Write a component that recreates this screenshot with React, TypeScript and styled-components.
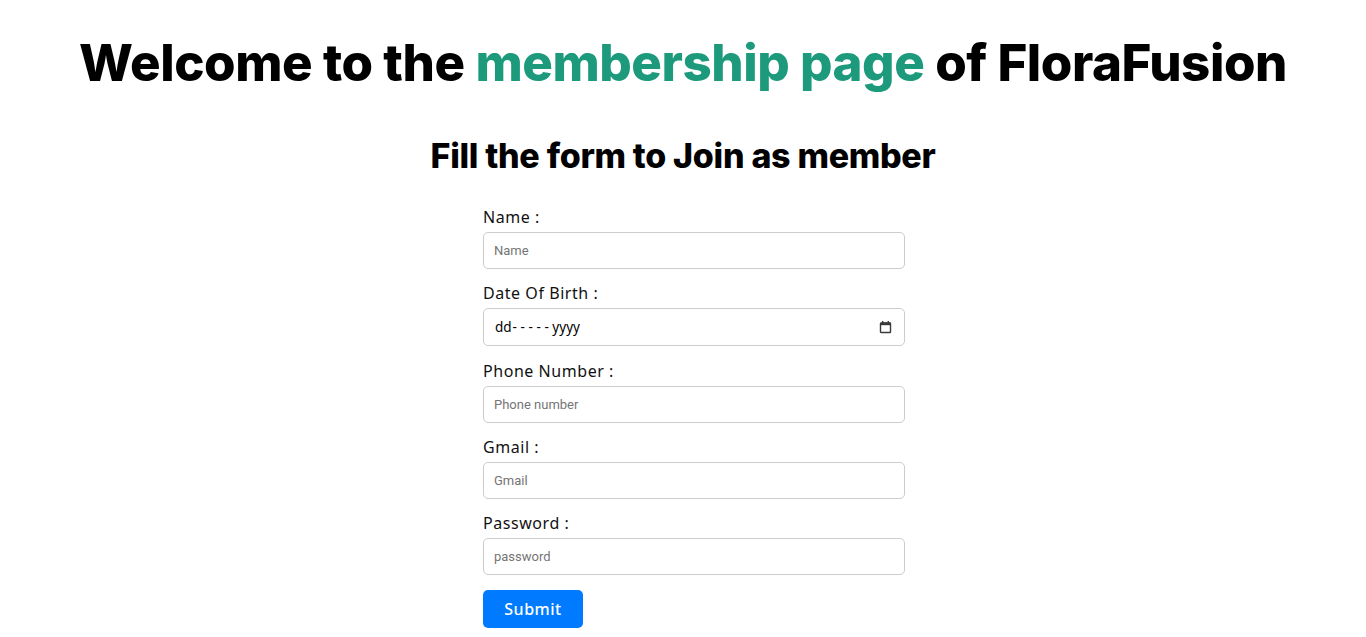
import React from "react";
import styled, { createGlobalStyle } from "styled-components";

const Global = createGlobalStyle`
  html, body { margin: 0; padding: 0; background: #ffffff; }
  body { font-family: "Liberation Sans", Arial, sans-serif; }
  * { box-sizing: border-box; }
`;

const Page = styled.main`
  display: flex;
  flex-direction: column;
  align-items: center;
  padding-top: 28px;
`;

const Title = styled.h1`
  margin: 0;
  font-family: Inter, "Open Sans", sans-serif;
  font-weight: 800;
  font-size: 51px;
  line-height: 70px;
  letter-spacing: -0.45px;
  color: #000000;
  text-align: center;
`;

const Accent = styled.span`
  color: #1c9a7b;
`;

const Subtitle = styled.h2`
  margin: 36px 0 0;
  font-family: Inter, "Open Sans", sans-serif;
  font-weight: 800;
  font-size: 34px;
  line-height: 44px;
  letter-spacing: -0.3px;
  color: #000000;
  text-align: center;
`;

const Form = styled.form`
  width: 422px;
  margin: 29px 0 0 22px;
  display: flex;
  flex-direction: column;
`;

const Field = styled.div<{ $extra?: number }>`
  display: flex;
  flex-direction: column;
  margin-bottom: ${(p) => 14 + (p.$extra ?? 0)}px;
`;

const Label = styled.label`
  font-family: "Noto Sans", "Open Sans", sans-serif;
  font-size: 16px;
  line-height: 20px;
  letter-spacing: 0.55px;
  color: #111111;
  margin-bottom: 5px;
`;

const Input = styled.input`
  width: 100%;
  height: 37px;
  border: 1px solid #cccccc;
  border-radius: 5px;
  padding: 0 10px;
  font-family: Roboto, sans-serif;
  font-size: 13px;
  color: #222;
  background: #fff;
  outline: none;
  &::placeholder { color: #757575; }
`;

const DateBox = styled.div`
  width: 100%;
  height: 38px;
  border: 1px solid #cccccc;
  border-radius: 5px;
  padding: 0 12px 0 11px;
  display: flex;
  align-items: center;
  justify-content: space-between;
  background: #fff;
  font-family: "Noto Sans", "DejaVu Sans", sans-serif;
  font-size: 13.5px;
  color: #000;
`;

const DateText = styled.span`
  display: inline-flex;
  align-items: center;
`;

const Dashes = styled.span`
  letter-spacing: 3.6px;
  margin: 0 0 0 1px;
`;

const Submit = styled.button`
  width: 100px;
  height: 38px;
  border: none;
  border-radius: 5px;
  background: #007bff;
  color: #ffffff;
  font-family: "Noto Sans", "Open Sans", sans-serif;
  font-size: 16px;
  font-weight: 500;
  letter-spacing: 0.5px;
  cursor: pointer;
  margin-top: 1px;
`;

const CalendarIcon = () => (
  <svg width="13" height="14" viewBox="0 0 13 14" aria-hidden="true">
    <rect x="1.5" y="3" width="10" height="9.5" fill="none" stroke="#3a3a3a" strokeWidth="1.4" rx="0.6" />
    <rect x="1.5" y="2.6" width="10" height="2.6" fill="#3a3a3a" />
    <rect x="3" y="1" width="1.4" height="2" fill="#3a3a3a" />
    <rect x="8.6" y="1" width="1.4" height="2" fill="#3a3a3a" />
  </svg>
);

const fields = [
  { label: "Name :", type: "text", ph: "Name" },
  { label: "Date Of Birth :", type: "date", ph: "" },
  { label: "Phone Number :", type: "tel", ph: "Phone number" },
  { label: "Gmail :", type: "email", ph: "Gmail" },
  { label: "Password :", type: "password", ph: "password" },
];

export default function App() {
  return (
    <>
      <Global />
      <Page>
        <Title>
          Welcome to the <Accent>membership page</Accent> of FloraFusion
        </Title>
        <Subtitle>Fill the form to Join as member</Subtitle>
        <Form onSubmit={(e) => e.preventDefault()}>
          {fields.map((f) => (
            <Field key={f.label} $extra={f.type === "date" ? 1 : 0}>
              <Label>{f.label}</Label>
              {f.type === "date" ? (
                <DateBox role="textbox" aria-label="Date Of Birth">
                  <DateText>
                    dd<Dashes>-----</Dashes>yyyy
                  </DateText>
                  <CalendarIcon />
                </DateBox>
              ) : (
                <Input type={f.type} placeholder={f.ph} />
              )}
            </Field>
          ))}
          <div>
            <Submit type="submit">Submit</Submit>
          </div>
        </Form>
      </Page>
    </>
  );
}
